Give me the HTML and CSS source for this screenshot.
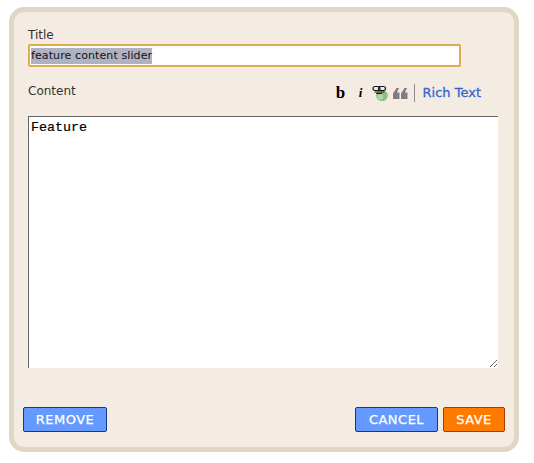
FILE: index.html
```html
<!DOCTYPE html>
<html lang="en">
<head>
<meta charset="utf-8">
<title>Edit</title>
<link rel="stylesheet" href="styles.css">
</head>
<body>
<form class="panel">
  <div class="label title-label">Title</div>
  <div class="title-input"><span class="selected">feature content slider</span></div>
  <div class="toolbar-row">
    <div class="label">Content</div>
    <div class="toolbar">
      <span class="tool tool-b">b</span>
      <span class="tool tool-i">i</span>
      <span class="tool tool-link">
        <svg width="16" height="16" viewBox="0 0 16 16">
          <circle cx="10" cy="10.500" r="5.800" fill="#8fbf7f"/>
          <circle cx="8.500" cy="12" r="2.800" fill="#b5d8a8"/>
          <rect x="1" y="1.500" width="7" height="4" rx="2" fill="none" stroke="#111" stroke-width="1.200"/>
          <rect x="6.500" y="1.500" width="7" height="4" rx="2" fill="none" stroke="#111" stroke-width="1.200"/>
          <path d="M2.500 7h10M4 8.500h6" stroke="#222" stroke-width="1"/>
        </svg>
      </span>
      <span class="tool tool-quote">
        <svg width="15" height="12" viewBox="0 0 15 12">
          <path d="M0 12V6.500L3.500 1H6L4 5.500H6.500V12ZM8 12V6.500L11.500 1H14L12 5.500H14.500V12Z" fill="#7f7f7f"/>
        </svg>
      </span>
      <span class="divider"></span>
      <a class="rich" href="#">Rich Text</a>
    </div>
  </div>
  <textarea class="content" spellcheck="false">Feature</textarea>
  <div class="actions">
    <button class="btn btn-blue btn-remove" type="button">REMOVE</button>
    <div class="actions-right">
      <button class="btn btn-blue btn-cancel" type="button">CANCEL</button>
      <button class="btn btn-orange btn-save" type="button">SAVE</button>
    </div>
  </div>
</form>
</body>
</html>
```
FILE: styles.css
```css
* { box-sizing: border-box; }
html, body { background: #fff; }
body { margin: 7px 0 0 9px; width: 510px; font-family: "DejaVu Sans", Verdana, sans-serif; }
.panel {
  width: 510px;
  height: 445px;
  background: #f4ece3;
  border: 5px solid #e1d6c3;
  border-radius: 15px;
  padding: 16px 14px 0 9px;
  display: flex;
  flex-direction: column;
}
.label { font-size: 12px; line-height: 14px; color: #333; margin-left: 5px; }
.title-input {
  margin: 2px 0 0 5px;
  width: 433px;
  height: 23px;
  background: #fff;
  border: 2px solid #e0ac52;
  border-radius: 2px;
  font-size: 11px;
  letter-spacing: 0.1px;
  padding-left: 1px;
  color: #111;
  display: flex;
  align-items: center;
}
.selected { background: #afb2c0; height: 16px; line-height: 16px; }
.toolbar-row {
  display: flex;
  justify-content: space-between;
  align-items: center;
  margin: 12px 0 0 0;
  width: 458px;
  height: 24px;
}
.toolbar { display: flex; align-items: center; padding-top: 4px; }
.tool { width: 20px; height: 20px; display: flex; align-items: center; justify-content: center; }
.tool-b { font: bold 17px/20px "Liberation Serif", serif; color: #000; }
.tool-i { font: bold italic 13px/20px "Liberation Serif", serif; color: #000; }
.tool-link { width: 18px; }
.tool-quote { width: 23px; }
.divider { width: 1px; height: 18px; background: #8c8c8c; margin: 0 8px 0 2px; }
.rich { font-size: 13px; color: #3366cc; text-decoration: none; -webkit-text-stroke: 0.3px #3366cc; margin-top: -2px; }
.content {
  display: block;
  margin: 13px 0 0 5px;
  width: 470px;
  height: 252px;
  background: #fff;
  border: solid #666;
  border-width: 1px 0 0 1px;
  outline: 0;
  padding: 3px 2px;
  font: 13.33px/16px "Liberation Mono", monospace;
  -webkit-text-stroke: 0.2px #000;
  color: #000;
  resize: both;
}
.actions { display: flex; justify-content: space-between; margin-top: 39px; width: 482px; }
.actions-right { display: flex; gap: 5px; }
.btn {
  height: 25px;
  border: 1px solid;
  border-radius: 2px;
  padding: 1px 0 0;
  color: #fff;
  font: 13px/22px "DejaVu Sans", Verdana, sans-serif;
  -webkit-text-stroke: 0.25px #fff;
  letter-spacing: 0.5px;
}
.btn-blue { background: #6699ff; border-color: #0f3a8c; }
.btn-orange { background: #ff7b00; border-color: #a83c00; }
.btn-remove { width: 84px; }
.btn-cancel { width: 83px; }
.btn-save { width: 62px; }
```
